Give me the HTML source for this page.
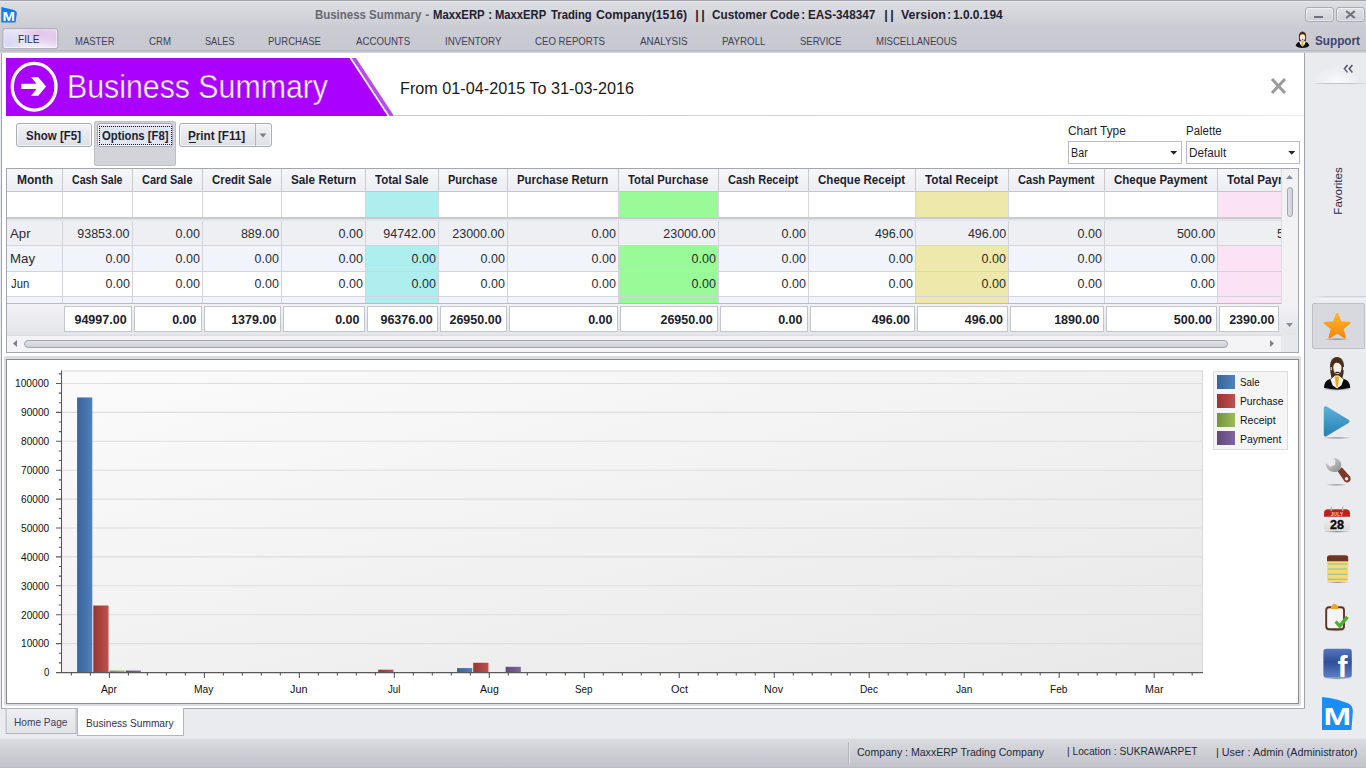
<!DOCTYPE html>
<html lang="en"><head><meta charset="utf-8"><title>Business Summary - MaxxERP</title>
<style>
html,body{margin:0;padding:0}
body{width:1366px;height:768px;overflow:hidden;position:relative;background:#eaebef;font-family:"Liberation Sans",sans-serif}
div,span.t,svg{position:absolute;box-sizing:border-box}
span.t{white-space:pre;transform-origin:0 50%;display:block}
</style></head>
<body>
<div style="left:0px;top:0px;width:1366px;height:53px;background:linear-gradient(#dedfe3 0,#d6d7dc 12px,#cbccd3 28px,#c8c9d0 49.5px,#b7b8c1 50.5px,#cdced5 52px,#d7d8dd 53px)"></div>
<div style="left:0px;top:0px;width:1366px;height:1px;background:#a4a6ae"></div>
<div style="left:0px;top:1px;width:1366px;height:1px;background:#e4e5e9"></div>
<svg style="left:0px;top:5px" width="19" height="19" viewBox="0 5 19 19"><path d="M1.3 6.9 L13.2 9.8 Q17.2 11 16.8 13.6 L15.6 22.6 L1.3 22.6 Z" fill="#0b80ee"/><text x="8.7" y="20.6" font-family="Liberation Sans,sans-serif" font-size="12" font-weight="700" fill="#fff" text-anchor="middle" textLength="12.4" lengthAdjust="spacingAndGlyphs">M</text></svg>
<span class="t" style="left:315.40px;top:4.30px;font-size:13.1px;line-height:21px;font-weight:700;color:#666873;transform:scaleX(0.8742);">Business Summary</span>
<span class="t" style="left:425.32px;top:4.30px;font-size:13.1px;line-height:21px;font-weight:700;color:#666873;transform-origin:50% 50%;transform:scaleX(0.9200);">-</span>
<span class="t" style="left:433.30px;top:4.30px;font-size:13.1px;line-height:21px;font-weight:700;color:#1f2030;transform:scaleX(0.8659);">MaxxERP</span>
<span class="t" style="left:487.62px;top:4.30px;font-size:13.1px;line-height:21px;font-weight:700;color:#1f2030;transform-origin:50% 50%;transform:scaleX(0.8800);">:</span>
<span class="t" style="left:494.80px;top:4.30px;font-size:13.1px;line-height:21px;font-weight:700;color:#1f2030;transform:scaleX(0.8575);">MaxxERP</span>
<span class="t" style="left:550.60px;top:4.30px;font-size:13.1px;line-height:21px;font-weight:700;color:#1f2030;transform:scaleX(0.8603);">Trading</span>
<span class="t" style="left:595.50px;top:4.30px;font-size:13.1px;line-height:21px;font-weight:700;color:#1f2030;transform:scaleX(0.9338);">Company(1516)</span>
<span class="t" style="left:694.54px;top:4.30px;font-size:13.1px;line-height:21px;font-weight:700;color:#1f2030;transform-origin:50% 50%;transform:scaleX(0.9600);letter-spacing:2.6px;">||</span>
<span class="t" style="left:712.20px;top:4.30px;font-size:13.1px;line-height:21px;font-weight:700;color:#1f2030;transform:scaleX(0.8962);">Customer</span>
<span class="t" style="left:770.30px;top:4.30px;font-size:13.1px;line-height:21px;font-weight:700;color:#1f2030;transform:scaleX(0.9007);">Code</span>
<span class="t" style="left:801.42px;top:4.30px;font-size:13.1px;line-height:21px;font-weight:700;color:#1f2030;transform-origin:50% 50%;transform:scaleX(0.8800);">:</span>
<span class="t" style="left:807.50px;top:4.30px;font-size:13.1px;line-height:21px;font-weight:700;color:#1f2030;transform:scaleX(0.8972);">EAS-348347</span>
<span class="t" style="left:883.54px;top:4.30px;font-size:13.1px;line-height:21px;font-weight:700;color:#1f2030;transform-origin:50% 50%;transform:scaleX(0.9600);letter-spacing:2.6px;">||</span>
<span class="t" style="left:901.00px;top:4.30px;font-size:13.1px;line-height:21px;font-weight:700;color:#1f2030;transform:scaleX(0.9466);">Version</span>
<span class="t" style="left:947.32px;top:4.30px;font-size:13.1px;line-height:21px;font-weight:700;color:#1f2030;transform-origin:50% 50%;transform:scaleX(0.8800);">:</span>
<span class="t" style="left:953.00px;top:4.30px;font-size:13.1px;line-height:21px;font-weight:700;color:#1f2030;transform:scaleX(0.9097);">1.0.0.194</span>
<div style="left:1305px;top:7px;width:29px;height:15px;border:1px solid #a9abb4;border-radius:3px;background:linear-gradient(#e2e3e7,#cfd0d6);box-shadow:inset 0 0 0 1px rgba(255,255,255,.45)"></div>
<div style="left:1336px;top:7px;width:29px;height:15px;border:1px solid #a9abb4;border-radius:3px;background:linear-gradient(#e2e3e7,#cfd0d6);box-shadow:inset 0 0 0 1px rgba(255,255,255,.45)"></div>
<div style="left:1314px;top:16px;width:9px;height:2px;background:#6f7180"></div>
<svg style="left:1345px;top:10px" width="11" height="9" viewBox="0 0 11 9"><path d="M1.2 1 L9.8 8 M9.8 1 L1.2 8" stroke="#6f7180" stroke-width="2.2" fill="none"/></svg>
<div style="left:2px;top:28px;width:56px;height:21px;transform:translate(0.4px,0.2px);border:1px solid #a9aab5;border-radius:3px;background:radial-gradient(ellipse 38% 80% at 66% 12%,rgba(226,188,232,.85),rgba(226,188,232,0) 100%),radial-gradient(ellipse 30% 70% at 96% 40%,rgba(222,192,232,.8),rgba(222,192,232,0) 100%),radial-gradient(ellipse 40% 70% at 8% 75%,rgba(212,212,246,.9),rgba(212,212,246,0) 100%),linear-gradient(#e9e3f4,#e8e4f5 55%,#f4f0fb);box-shadow:inset 0 0 0 1px rgba(255,255,255,.75)"></div>
<span class="t" style="left:18.00px;top:28.50px;font-size:11.6px;line-height:19px;font-weight:400;color:#2e3046;transform:scaleX(0.8776);">FILE</span>
<span class="t" style="left:74.50px;top:30.50px;font-size:11.6px;line-height:19px;font-weight:400;color:#3d4056;transform:scaleX(0.8171);">MASTER</span>
<span class="t" style="left:148.50px;top:30.50px;font-size:11.6px;line-height:19px;font-weight:400;color:#3d4056;transform:scaleX(0.8328);">CRM</span>
<span class="t" style="left:204.50px;top:30.50px;font-size:11.6px;line-height:19px;font-weight:400;color:#3d4056;transform:scaleX(0.7887);">SALES</span>
<span class="t" style="left:268.00px;top:30.50px;font-size:11.6px;line-height:19px;font-weight:400;color:#3d4056;transform:scaleX(0.8222);">PURCHASE</span>
<span class="t" style="left:355.75px;top:30.50px;font-size:11.6px;line-height:19px;font-weight:400;color:#3d4056;transform:scaleX(0.8334);">ACCOUNTS</span>
<span class="t" style="left:444.50px;top:30.50px;font-size:11.6px;line-height:19px;font-weight:400;color:#3d4056;transform:scaleX(0.8401);">INVENTORY</span>
<span class="t" style="left:535.00px;top:30.50px;font-size:11.6px;line-height:19px;font-weight:400;color:#3d4056;transform:scaleX(0.8311);">CEO REPORTS</span>
<span class="t" style="left:639.50px;top:30.50px;font-size:11.6px;line-height:19px;font-weight:400;color:#3d4056;transform:scaleX(0.8501);">ANALYSIS</span>
<span class="t" style="left:721.50px;top:30.50px;font-size:11.6px;line-height:19px;font-weight:400;color:#3d4056;transform:scaleX(0.8399);">PAYROLL</span>
<span class="t" style="left:799.50px;top:30.50px;font-size:11.6px;line-height:19px;font-weight:400;color:#3d4056;transform:scaleX(0.8182);">SERVICE</span>
<span class="t" style="left:875.50px;top:30.50px;font-size:11.6px;line-height:19px;font-weight:400;color:#3d4056;transform:scaleX(0.8212);">MISCELLANEOUS</span>
<svg style="left:1295px;top:31px" width="15" height="17" viewBox="0 0 15 17"><ellipse cx="7.5" cy="14.2" rx="6.6" ry="2.8" fill="#111"/><path d="M1.2 14 Q1.6 11.4 4.6 10.8 L7.5 10.2 L10.4 10.8 Q13.4 11.4 13.8 14 Z" fill="#101010"/><path d="M4.4 10.9 L5.6 10.2 L9.4 10.2 L10.6 10.9 L9.6 13.6 L7.5 15.8 L5.4 13.6 Z" fill="#f4f4f4"/><path d="M6.7 10.2 L8.3 10.2 L8.6 14 L7.5 15.6 L6.4 14 Z" fill="#f0b000"/><path d="M4.3 10 Q3.2 5 4.6 2.6 Q5.8 0.4 7.5 0.4 Q9.2 0.4 10.4 2.6 Q11.8 5 10.7 10 Z" fill="#4a2c17"/><ellipse cx="7.5" cy="6.3" rx="2.7" ry="3.7" fill="#f9e8d8"/><circle cx="7.7" cy="8.6" r="0.7" fill="#333"/><path d="M4.5 5.4 Q4.4 1 7.5 1 Q10.6 1 10.5 5.4 Q9.6 3.2 7.5 3.3 Q5.4 3.2 4.5 5.4 Z" fill="#4a2c17"/></svg>
<span class="t" style="left:1314.75px;top:29.80px;font-size:13.1px;line-height:21px;font-weight:700;color:#3a4470;transform:scaleX(0.8963);">Support</span>
<div style="left:1px;top:53px;width:1304px;height:656px;background:#fff;border:1px solid #a1a3ac;border-top:none"></div>
<svg style="left:6px;top:58px" width="392" height="58" viewBox="0 0 392 58"><path d="M0 0 H343.5 L381.5 58 H0 Z" fill="#aa00ff"/><path d="M345.6 0 H350 L388 58 H383.6 Z" fill="#b34df2"/><ellipse cx="28.15" cy="28.7" rx="21.9" ry="23.35" fill="none" stroke="#fff" stroke-width="3.3"/><path d="M25 19.15 H32.3 L40.1 28.5 L32.3 37.7 H25 L30.5 31.1 H15.35 V25.85 H30.5 Z" fill="#fff"/></svg>
<span class="t" style="left:66.50px;top:60.00px;font-size:33px;line-height:53px;font-weight:400;color:#fff;transform:scaleX(0.9182);-webkit-text-stroke:0.45px #aa00ff;">Business Summary</span>
<span class="t" style="left:400.00px;top:74.70px;font-size:17px;line-height:27px;font-weight:400;color:#1a1a1a;transform:scaleX(0.9535);">From 01-04-2015 To 31-03-2016</span>
<div style="left:393px;top:115px;width:911px;height:1px;background:linear-gradient(90deg,#c9cad0,#d9dade 80%,#eeeef1)"></div>
<svg style="left:1270px;top:77px" width="17" height="18" viewBox="0 0 17 18"><path d="M2 2 L15 16 M15 2 L2 16" stroke="#9b9b9b" stroke-width="3" fill="none"/></svg>
<div style="left:16px;top:123px;width:76px;height:24px;border:1px solid #a9abb5;border-radius:3px;background:linear-gradient(#f4f4f7,#e9eaee 45%,#dfe0e6);box-shadow:inset 0 0 0 1px rgba(255,255,255,.7)"></div>
<span class="t" style="left:26.00px;top:124.80px;font-size:13.1px;line-height:21px;font-weight:700;color:#1d1e2c;transform:scaleX(0.8788);">Show [F5]</span>
<div style="left:94px;top:121px;width:82px;height:45px;background:#d3d4da;border:1px solid #bdbec6;border-radius:2px"></div>
<div style="left:96.5px;top:123px;width:76.5px;height:24px;border:1px solid #a2a6b8;border-radius:3px;background:linear-gradient(#e3e7f5,#dde2f1 50%,#e6e9f5);box-shadow:inset 0 0 0 1px rgba(255,255,255,.6)"></div>
<div style="left:99px;top:126px;width:72.5px;height:18.5px;border:1px dotted #15151f"></div>
<span class="t" style="left:101.50px;top:124.80px;font-size:13.1px;line-height:21px;font-weight:700;color:#1d1e2c;transform:scaleX(0.8621);">Options [F8]</span>
<div style="left:179px;top:123px;width:93px;height:24px;border:1px solid #a9abb5;border-radius:3px;background:linear-gradient(#f4f4f7,#e9eaee 45%,#dfe0e6);box-shadow:inset 0 0 0 1px rgba(255,255,255,.7)"></div>
<div style="left:255px;top:124px;width:1px;height:22px;background:#b4b6bf"></div>
<span class="t" style="left:188.00px;top:124.80px;font-size:13.1px;line-height:21px;font-weight:700;color:#1d1e2c;transform:scaleX(0.8945);">Print [F11]</span>
<div style="left:188.5px;top:142px;width:7px;height:1px;background:#1d1e2c"></div>
<svg style="left:259px;top:133px" width="8" height="5" viewBox="0 0 8 5"><path d="M0.6 0.6 H7.4 L4 4.4 Z" fill="#7b7d88"/></svg>
<span class="t" style="left:1068.20px;top:120.90px;font-size:12.5px;line-height:20px;font-weight:400;color:#1d1e2c;transform:scaleX(0.9489);">Chart Type</span>
<span class="t" style="left:1186.30px;top:120.90px;font-size:12.5px;line-height:20px;font-weight:400;color:#1d1e2c;transform:scaleX(0.9173);">Palette</span>
<div style="left:1068px;top:141px;width:114px;height:23px;background:#fff;border:1px solid #b8bac4"></div>
<div style="left:1186px;top:141px;width:114px;height:23px;background:#fff;border:1px solid #b8bac4"></div>
<span class="t" style="left:1071.00px;top:143.00px;font-size:12.5px;line-height:20px;font-weight:400;color:#1d1e2c;transform:scaleX(0.8585);">Bar</span>
<span class="t" style="left:1189.40px;top:143.00px;font-size:12.5px;line-height:20px;font-weight:400;color:#1d1e2c;transform:scaleX(0.9392);">Default</span>
<svg style="left:1170px;top:151px" width="8" height="4" viewBox="0 0 8 4"><path d="M0.3 0 H7.2 L3.75 3.8 Z" fill="#23232d"/></svg>
<svg style="left:1288px;top:151px" width="8" height="4" viewBox="0 0 8 4"><path d="M0.3 0 H7.2 L3.75 3.8 Z" fill="#23232d"/></svg>
<div style="left:6px;top:168px;width:1293px;height:185px;background:#fff;border:1px solid #a3a6b0"></div>
<div style="left:7px;top:169px;width:1274px;height:135px;overflow:hidden">
<div style="left:0px;top:0px;width:1274px;height:22px;background:linear-gradient(#f6f6f9,#f1f2f6 60%,#edeef3)"></div>
<div style="left:0px;top:22px;width:1274px;height:1px;background:#c4c6ce"></div>
<div style="left:0px;top:23px;width:1274px;height:25px;background:#fff"></div>
<div style="left:0px;top:48px;width:1274px;height:2px;background:#c9cad1"></div>
<div style="left:0px;top:49.5px;width:1274px;height:2px;background:#e4e5ea"></div>
<div style="left:0px;top:51.5px;width:1274px;height:25px;background:#eeeff2"></div>
<div style="left:0px;top:76px;width:1274px;height:1px;background:#d3d4db"></div>
<div style="left:0px;top:77px;width:1274px;height:25px;background:#f1f4fa"></div>
<div style="left:0px;top:101.5px;width:1274px;height:1px;background:#d3d4db"></div>
<div style="left:0px;top:102.5px;width:1274px;height:25px;background:#fff"></div>
<div style="left:0px;top:127px;width:1274px;height:1px;background:#d3d4db"></div>
<div style="left:0px;top:128px;width:1274px;height:7px;background:#f1f4fa"></div>
<div style="left:359px;top:23px;width:72px;height:25px;background:#afeeee"></div>
<div style="left:359px;top:77px;width:72px;height:24.5px;background:#afeeee"></div>
<div style="left:359px;top:102.5px;width:72px;height:24.5px;background:#afeeee"></div>
<div style="left:359px;top:128px;width:72px;height:7px;background:#afeeee"></div>
<div style="left:612px;top:23px;width:99px;height:25px;background:#98fb98"></div>
<div style="left:612px;top:77px;width:99px;height:24.5px;background:#98fb98"></div>
<div style="left:612px;top:102.5px;width:99px;height:24.5px;background:#98fb98"></div>
<div style="left:612px;top:128px;width:99px;height:7px;background:#98fb98"></div>
<div style="left:909px;top:23px;width:92px;height:25px;background:#eee8aa"></div>
<div style="left:909px;top:77px;width:92px;height:24.5px;background:#eee8aa"></div>
<div style="left:909px;top:102.5px;width:92px;height:24.5px;background:#eee8aa"></div>
<div style="left:909px;top:128px;width:92px;height:7px;background:#eee8aa"></div>
<div style="left:1211px;top:23px;width:99px;height:25px;background:#fbe3f5"></div>
<div style="left:1211px;top:77px;width:99px;height:24.5px;background:#fbe3f5"></div>
<div style="left:1211px;top:102.5px;width:99px;height:24.5px;background:#fbe3f5"></div>
<div style="left:1211px;top:128px;width:99px;height:7px;background:#fbe3f5"></div>
<div style="left:55px;top:0px;width:1px;height:23px;background:#c9cbd3"></div>
<div style="left:55px;top:23px;width:1px;height:25px;background:#d6d7dd"></div>
<div style="left:55px;top:51.5px;width:1px;height:83px;background:#d3d4db"></div>
<div style="left:125px;top:0px;width:1px;height:23px;background:#c9cbd3"></div>
<div style="left:125px;top:23px;width:1px;height:25px;background:#d6d7dd"></div>
<div style="left:125px;top:51.5px;width:1px;height:83px;background:#d3d4db"></div>
<div style="left:195px;top:0px;width:1px;height:23px;background:#c9cbd3"></div>
<div style="left:195px;top:23px;width:1px;height:25px;background:#d6d7dd"></div>
<div style="left:195px;top:51.5px;width:1px;height:83px;background:#d3d4db"></div>
<div style="left:274px;top:0px;width:1px;height:23px;background:#c9cbd3"></div>
<div style="left:274px;top:23px;width:1px;height:25px;background:#d6d7dd"></div>
<div style="left:274px;top:51.5px;width:1px;height:83px;background:#d3d4db"></div>
<div style="left:358px;top:0px;width:1px;height:23px;background:#c9cbd3"></div>
<div style="left:358px;top:23px;width:1px;height:25px;background:#d6d7dd"></div>
<div style="left:358px;top:51.5px;width:1px;height:83px;background:#d3d4db"></div>
<div style="left:431px;top:0px;width:1px;height:23px;background:#c9cbd3"></div>
<div style="left:431px;top:23px;width:1px;height:25px;background:#d6d7dd"></div>
<div style="left:431px;top:51.5px;width:1px;height:83px;background:#d3d4db"></div>
<div style="left:500px;top:0px;width:1px;height:23px;background:#c9cbd3"></div>
<div style="left:500px;top:23px;width:1px;height:25px;background:#d6d7dd"></div>
<div style="left:500px;top:51.5px;width:1px;height:83px;background:#d3d4db"></div>
<div style="left:611px;top:0px;width:1px;height:23px;background:#c9cbd3"></div>
<div style="left:611px;top:23px;width:1px;height:25px;background:#d6d7dd"></div>
<div style="left:611px;top:51.5px;width:1px;height:83px;background:#d3d4db"></div>
<div style="left:711px;top:0px;width:1px;height:23px;background:#c9cbd3"></div>
<div style="left:711px;top:23px;width:1px;height:25px;background:#d6d7dd"></div>
<div style="left:711px;top:51.5px;width:1px;height:83px;background:#d3d4db"></div>
<div style="left:801px;top:0px;width:1px;height:23px;background:#c9cbd3"></div>
<div style="left:801px;top:23px;width:1px;height:25px;background:#d6d7dd"></div>
<div style="left:801px;top:51.5px;width:1px;height:83px;background:#d3d4db"></div>
<div style="left:908px;top:0px;width:1px;height:23px;background:#c9cbd3"></div>
<div style="left:908px;top:23px;width:1px;height:25px;background:#d6d7dd"></div>
<div style="left:908px;top:51.5px;width:1px;height:83px;background:#d3d4db"></div>
<div style="left:1001px;top:0px;width:1px;height:23px;background:#c9cbd3"></div>
<div style="left:1001px;top:23px;width:1px;height:25px;background:#d6d7dd"></div>
<div style="left:1001px;top:51.5px;width:1px;height:83px;background:#d3d4db"></div>
<div style="left:1097px;top:0px;width:1px;height:23px;background:#c9cbd3"></div>
<div style="left:1097px;top:23px;width:1px;height:25px;background:#d6d7dd"></div>
<div style="left:1097px;top:51.5px;width:1px;height:83px;background:#d3d4db"></div>
<div style="left:1210px;top:0px;width:1px;height:23px;background:#c9cbd3"></div>
<div style="left:1210px;top:23px;width:1px;height:25px;background:#d6d7dd"></div>
<div style="left:1210px;top:51.5px;width:1px;height:83px;background:#d3d4db"></div>
</div>
<div style="left:7px;top:169px;width:1274px;height:135px;overflow:hidden;background:none">
<span class="t" style="left:9.50px;top:-0.10px;font-size:13.1px;line-height:21px;font-weight:700;color:#1d1e2c;transform:scaleX(0.9164);">Month</span>
<span class="t" style="left:65.00px;top:-0.10px;font-size:13.1px;line-height:21px;font-weight:700;color:#1d1e2c;transform:scaleX(0.8064);">Cash Sale</span>
<span class="t" style="left:135.00px;top:-0.10px;font-size:13.1px;line-height:21px;font-weight:700;color:#1d1e2c;transform:scaleX(0.8356);">Card Sale</span>
<span class="t" style="left:204.75px;top:-0.10px;font-size:13.1px;line-height:21px;font-weight:700;color:#1d1e2c;transform:scaleX(0.8694);">Credit Sale</span>
<span class="t" style="left:283.50px;top:-0.10px;font-size:13.1px;line-height:21px;font-weight:700;color:#1d1e2c;transform:scaleX(0.8963);">Sale Return</span>
<span class="t" style="left:368.25px;top:-0.10px;font-size:13.1px;line-height:21px;font-weight:700;color:#1d1e2c;transform:scaleX(0.8784);">Total Sale</span>
<span class="t" style="left:441.25px;top:-0.10px;font-size:13.1px;line-height:21px;font-weight:700;color:#1d1e2c;transform:scaleX(0.8350);">Purchase</span>
<span class="t" style="left:510.00px;top:-0.10px;font-size:13.1px;line-height:21px;font-weight:700;color:#1d1e2c;transform:scaleX(0.8704);">Purchase Return</span>
<span class="t" style="left:621.25px;top:-0.10px;font-size:13.1px;line-height:21px;font-weight:700;color:#1d1e2c;transform:scaleX(0.8634);">Total Purchase</span>
<span class="t" style="left:721.25px;top:-0.10px;font-size:13.1px;line-height:21px;font-weight:700;color:#1d1e2c;transform:scaleX(0.8464);">Cash Receipt</span>
<span class="t" style="left:811.25px;top:-0.10px;font-size:13.1px;line-height:21px;font-weight:700;color:#1d1e2c;transform:scaleX(0.8813);">Cheque Receipt</span>
<span class="t" style="left:918.25px;top:-0.10px;font-size:13.1px;line-height:21px;font-weight:700;color:#1d1e2c;transform:scaleX(0.8981);">Total Receipt</span>
<span class="t" style="left:1011.00px;top:-0.10px;font-size:13.1px;line-height:21px;font-weight:700;color:#1d1e2c;transform:scaleX(0.8473);">Cash Payment</span>
<span class="t" style="left:1107.00px;top:-0.10px;font-size:13.1px;line-height:21px;font-weight:700;color:#1d1e2c;transform:scaleX(0.8797);">Cheque Payment</span>
<span class="t" style="left:1220.00px;top:-0.10px;font-size:13.1px;line-height:21px;font-weight:700;color:#1d1e2c;transform:scaleX(0.8897);">Total Payment</span>
<span class="t" style="left:3.00px;top:54.70px;font-size:12.8px;line-height:20px;font-weight:400;color:#2a2b36;transform:scaleX(1.0341);">Apr</span>
<span class="t" style="right:1151.20px;top:54.70px;font-size:12.8px;line-height:20px;font-weight:400;color:#2a2b36;transform-origin:100% 50%;transform:scaleX(0.9770);">93853.00</span>
<span class="t" style="right:1081.20px;top:54.70px;font-size:12.8px;line-height:20px;font-weight:400;color:#2a2b36;transform-origin:100% 50%;transform:scaleX(0.9770);">0.00</span>
<span class="t" style="right:1002.20px;top:54.70px;font-size:12.8px;line-height:20px;font-weight:400;color:#2a2b36;transform-origin:100% 50%;transform:scaleX(0.9770);">889.00</span>
<span class="t" style="right:918.20px;top:54.70px;font-size:12.8px;line-height:20px;font-weight:400;color:#2a2b36;transform-origin:100% 50%;transform:scaleX(0.9770);">0.00</span>
<span class="t" style="right:845.20px;top:54.70px;font-size:12.8px;line-height:20px;font-weight:400;color:#2a2b36;transform-origin:100% 50%;transform:scaleX(0.9770);">94742.00</span>
<span class="t" style="right:776.20px;top:54.70px;font-size:12.8px;line-height:20px;font-weight:400;color:#2a2b36;transform-origin:100% 50%;transform:scaleX(0.9770);">23000.00</span>
<span class="t" style="right:665.20px;top:54.70px;font-size:12.8px;line-height:20px;font-weight:400;color:#2a2b36;transform-origin:100% 50%;transform:scaleX(0.9770);">0.00</span>
<span class="t" style="right:565.20px;top:54.70px;font-size:12.8px;line-height:20px;font-weight:400;color:#2a2b36;transform-origin:100% 50%;transform:scaleX(0.9770);">23000.00</span>
<span class="t" style="right:475.20px;top:54.70px;font-size:12.8px;line-height:20px;font-weight:400;color:#2a2b36;transform-origin:100% 50%;transform:scaleX(0.9770);">0.00</span>
<span class="t" style="right:368.20px;top:54.70px;font-size:12.8px;line-height:20px;font-weight:400;color:#2a2b36;transform-origin:100% 50%;transform:scaleX(0.9770);">496.00</span>
<span class="t" style="right:275.20px;top:54.70px;font-size:12.8px;line-height:20px;font-weight:400;color:#2a2b36;transform-origin:100% 50%;transform:scaleX(0.9770);">496.00</span>
<span class="t" style="right:179.20px;top:54.70px;font-size:12.8px;line-height:20px;font-weight:400;color:#2a2b36;transform-origin:100% 50%;transform:scaleX(0.9770);">0.00</span>
<span class="t" style="right:66.20px;top:54.70px;font-size:12.8px;line-height:20px;font-weight:400;color:#2a2b36;transform-origin:100% 50%;transform:scaleX(0.9770);">500.00</span>
<span class="t" style="right:-33.80px;top:54.70px;font-size:12.8px;line-height:20px;font-weight:400;color:#2a2b36;transform-origin:100% 50%;transform:scaleX(0.9770);">500.00</span>
<span class="t" style="left:3.00px;top:79.80px;font-size:12.8px;line-height:20px;font-weight:400;color:#2a2b36;transform:scaleX(1.0338);">May</span>
<span class="t" style="right:1151.20px;top:79.80px;font-size:12.8px;line-height:20px;font-weight:400;color:#2a2b36;transform-origin:100% 50%;transform:scaleX(0.9770);">0.00</span>
<span class="t" style="right:1081.20px;top:79.80px;font-size:12.8px;line-height:20px;font-weight:400;color:#2a2b36;transform-origin:100% 50%;transform:scaleX(0.9770);">0.00</span>
<span class="t" style="right:1002.20px;top:79.80px;font-size:12.8px;line-height:20px;font-weight:400;color:#2a2b36;transform-origin:100% 50%;transform:scaleX(0.9770);">0.00</span>
<span class="t" style="right:918.20px;top:79.80px;font-size:12.8px;line-height:20px;font-weight:400;color:#2a2b36;transform-origin:100% 50%;transform:scaleX(0.9770);">0.00</span>
<span class="t" style="right:845.20px;top:79.80px;font-size:12.8px;line-height:20px;font-weight:400;color:#2a2b36;transform-origin:100% 50%;transform:scaleX(0.9770);">0.00</span>
<span class="t" style="right:776.20px;top:79.80px;font-size:12.8px;line-height:20px;font-weight:400;color:#2a2b36;transform-origin:100% 50%;transform:scaleX(0.9770);">0.00</span>
<span class="t" style="right:665.20px;top:79.80px;font-size:12.8px;line-height:20px;font-weight:400;color:#2a2b36;transform-origin:100% 50%;transform:scaleX(0.9770);">0.00</span>
<span class="t" style="right:565.20px;top:79.80px;font-size:12.8px;line-height:20px;font-weight:400;color:#2a2b36;transform-origin:100% 50%;transform:scaleX(0.9770);">0.00</span>
<span class="t" style="right:475.20px;top:79.80px;font-size:12.8px;line-height:20px;font-weight:400;color:#2a2b36;transform-origin:100% 50%;transform:scaleX(0.9770);">0.00</span>
<span class="t" style="right:368.20px;top:79.80px;font-size:12.8px;line-height:20px;font-weight:400;color:#2a2b36;transform-origin:100% 50%;transform:scaleX(0.9770);">0.00</span>
<span class="t" style="right:275.20px;top:79.80px;font-size:12.8px;line-height:20px;font-weight:400;color:#2a2b36;transform-origin:100% 50%;transform:scaleX(0.9770);">0.00</span>
<span class="t" style="right:179.20px;top:79.80px;font-size:12.8px;line-height:20px;font-weight:400;color:#2a2b36;transform-origin:100% 50%;transform:scaleX(0.9770);">0.00</span>
<span class="t" style="right:66.20px;top:79.80px;font-size:12.8px;line-height:20px;font-weight:400;color:#2a2b36;transform-origin:100% 50%;transform:scaleX(0.9770);">0.00</span>
<span class="t" style="right:-33.80px;top:79.80px;font-size:12.8px;line-height:20px;font-weight:400;color:#2a2b36;transform-origin:100% 50%;transform:scaleX(0.9770);">0.00</span>
<span class="t" style="left:3.60px;top:104.90px;font-size:12.8px;line-height:20px;font-weight:400;color:#2a2b36;transform:scaleX(0.8794);">Jun</span>
<span class="t" style="right:1151.20px;top:104.90px;font-size:12.8px;line-height:20px;font-weight:400;color:#2a2b36;transform-origin:100% 50%;transform:scaleX(0.9770);">0.00</span>
<span class="t" style="right:1081.20px;top:104.90px;font-size:12.8px;line-height:20px;font-weight:400;color:#2a2b36;transform-origin:100% 50%;transform:scaleX(0.9770);">0.00</span>
<span class="t" style="right:1002.20px;top:104.90px;font-size:12.8px;line-height:20px;font-weight:400;color:#2a2b36;transform-origin:100% 50%;transform:scaleX(0.9770);">0.00</span>
<span class="t" style="right:918.20px;top:104.90px;font-size:12.8px;line-height:20px;font-weight:400;color:#2a2b36;transform-origin:100% 50%;transform:scaleX(0.9770);">0.00</span>
<span class="t" style="right:845.20px;top:104.90px;font-size:12.8px;line-height:20px;font-weight:400;color:#2a2b36;transform-origin:100% 50%;transform:scaleX(0.9770);">0.00</span>
<span class="t" style="right:776.20px;top:104.90px;font-size:12.8px;line-height:20px;font-weight:400;color:#2a2b36;transform-origin:100% 50%;transform:scaleX(0.9770);">0.00</span>
<span class="t" style="right:665.20px;top:104.90px;font-size:12.8px;line-height:20px;font-weight:400;color:#2a2b36;transform-origin:100% 50%;transform:scaleX(0.9770);">0.00</span>
<span class="t" style="right:565.20px;top:104.90px;font-size:12.8px;line-height:20px;font-weight:400;color:#2a2b36;transform-origin:100% 50%;transform:scaleX(0.9770);">0.00</span>
<span class="t" style="right:475.20px;top:104.90px;font-size:12.8px;line-height:20px;font-weight:400;color:#2a2b36;transform-origin:100% 50%;transform:scaleX(0.9770);">0.00</span>
<span class="t" style="right:368.20px;top:104.90px;font-size:12.8px;line-height:20px;font-weight:400;color:#2a2b36;transform-origin:100% 50%;transform:scaleX(0.9770);">0.00</span>
<span class="t" style="right:275.20px;top:104.90px;font-size:12.8px;line-height:20px;font-weight:400;color:#2a2b36;transform-origin:100% 50%;transform:scaleX(0.9770);">0.00</span>
<span class="t" style="right:179.20px;top:104.90px;font-size:12.8px;line-height:20px;font-weight:400;color:#2a2b36;transform-origin:100% 50%;transform:scaleX(0.9770);">0.00</span>
<span class="t" style="right:66.20px;top:104.90px;font-size:12.8px;line-height:20px;font-weight:400;color:#2a2b36;transform-origin:100% 50%;transform:scaleX(0.9770);">0.00</span>
<span class="t" style="right:-33.80px;top:104.90px;font-size:12.8px;line-height:20px;font-weight:400;color:#2a2b36;transform-origin:100% 50%;transform:scaleX(0.9770);">0.00</span>
</div>
<div style="left:7px;top:303px;width:1291px;height:1px;background:#b9bbc4"></div>
<div style="left:7px;top:304px;width:1291px;height:31px;background:linear-gradient(#f2f2f5,#e4e5ea)"></div>
<div style="left:64px;top:306px;width:67.5px;height:26px;background:#fff;border:1px solid #c3c5cd"></div>
<span class="t" style="right:1239.10px;top:309.30px;font-size:13.1px;line-height:21px;font-weight:700;color:#1d1e2c;transform-origin:100% 50%;transform:scaleX(0.9550);">94997.00</span>
<div style="left:134px;top:306px;width:67.5px;height:26px;background:#fff;border:1px solid #c3c5cd"></div>
<span class="t" style="right:1169.10px;top:309.30px;font-size:13.1px;line-height:21px;font-weight:700;color:#1d1e2c;transform-origin:100% 50%;transform:scaleX(0.9550);">0.00</span>
<div style="left:204px;top:306px;width:76.5px;height:26px;background:#fff;border:1px solid #c3c5cd"></div>
<span class="t" style="right:1090.10px;top:309.30px;font-size:13.1px;line-height:21px;font-weight:700;color:#1d1e2c;transform-origin:100% 50%;transform:scaleX(0.9550);">1379.00</span>
<div style="left:283px;top:306px;width:81.5px;height:26px;background:#fff;border:1px solid #c3c5cd"></div>
<span class="t" style="right:1006.10px;top:309.30px;font-size:13.1px;line-height:21px;font-weight:700;color:#1d1e2c;transform-origin:100% 50%;transform:scaleX(0.9550);">0.00</span>
<div style="left:367px;top:306px;width:70.5px;height:26px;background:#fff;border:1px solid #c3c5cd"></div>
<span class="t" style="right:933.10px;top:309.30px;font-size:13.1px;line-height:21px;font-weight:700;color:#1d1e2c;transform-origin:100% 50%;transform:scaleX(0.9550);">96376.00</span>
<div style="left:440px;top:306px;width:66.5px;height:26px;background:#fff;border:1px solid #c3c5cd"></div>
<span class="t" style="right:864.10px;top:309.30px;font-size:13.1px;line-height:21px;font-weight:700;color:#1d1e2c;transform-origin:100% 50%;transform:scaleX(0.9550);">26950.00</span>
<div style="left:509px;top:306px;width:108.5px;height:26px;background:#fff;border:1px solid #c3c5cd"></div>
<span class="t" style="right:753.10px;top:309.30px;font-size:13.1px;line-height:21px;font-weight:700;color:#1d1e2c;transform-origin:100% 50%;transform:scaleX(0.9550);">0.00</span>
<div style="left:620px;top:306px;width:97.5px;height:26px;background:#fff;border:1px solid #c3c5cd"></div>
<span class="t" style="right:653.10px;top:309.30px;font-size:13.1px;line-height:21px;font-weight:700;color:#1d1e2c;transform-origin:100% 50%;transform:scaleX(0.9550);">26950.00</span>
<div style="left:720px;top:306px;width:87.5px;height:26px;background:#fff;border:1px solid #c3c5cd"></div>
<span class="t" style="right:563.10px;top:309.30px;font-size:13.1px;line-height:21px;font-weight:700;color:#1d1e2c;transform-origin:100% 50%;transform:scaleX(0.9550);">0.00</span>
<div style="left:810px;top:306px;width:104.5px;height:26px;background:#fff;border:1px solid #c3c5cd"></div>
<span class="t" style="right:456.10px;top:309.30px;font-size:13.1px;line-height:21px;font-weight:700;color:#1d1e2c;transform-origin:100% 50%;transform:scaleX(0.9550);">496.00</span>
<div style="left:917px;top:306px;width:90.5px;height:26px;background:#fff;border:1px solid #c3c5cd"></div>
<span class="t" style="right:363.10px;top:309.30px;font-size:13.1px;line-height:21px;font-weight:700;color:#1d1e2c;transform-origin:100% 50%;transform:scaleX(0.9550);">496.00</span>
<div style="left:1010px;top:306px;width:93.5px;height:26px;background:#fff;border:1px solid #c3c5cd"></div>
<span class="t" style="right:267.10px;top:309.30px;font-size:13.1px;line-height:21px;font-weight:700;color:#1d1e2c;transform-origin:100% 50%;transform:scaleX(0.9550);">1890.00</span>
<div style="left:1106px;top:306px;width:110.5px;height:26px;background:#fff;border:1px solid #c3c5cd"></div>
<span class="t" style="right:154.10px;top:309.30px;font-size:13.1px;line-height:21px;font-weight:700;color:#1d1e2c;transform-origin:100% 50%;transform:scaleX(0.9550);">500.00</span>
<div style="left:1219px;top:306px;width:59.5px;height:26px;background:#fff;border:1px solid #c3c5cd"></div>
<span class="t" style="right:92.10px;top:309.30px;font-size:13.1px;line-height:21px;font-weight:700;color:#1d1e2c;transform-origin:100% 50%;transform:scaleX(0.9550);">2390.00</span>
<div style="left:1281px;top:169px;width:17px;height:135px;background:#f2f2f5;border-left:1px solid #dcdde2"></div>
<div style="left:1286.5px;top:187px;width:6.5px;height:29.5px;background:linear-gradient(90deg,#dfe0e5,#cfd0d7);border:1px solid #a4a6b0;border-radius:3px"></div>
<svg style="left:1286px;top:175px" width="7" height="4" viewBox="0 0 7 4"><path d="M0 4 L3.5 0 L7 4 Z" fill="#8a8c97"/></svg>
<svg style="left:1286px;top:323px" width="7" height="4" viewBox="0 0 7 4"><path d="M0 0 L3.5 4 L7 0 Z" fill="#8a8c97"/></svg>
<div style="left:7px;top:335px;width:1291px;height:17px;background:#f4f4f7;border-top:1px solid #dcdde2"></div>
<div style="left:1281px;top:335px;width:17px;height:17px;background:#e7e8ec"></div>
<div style="left:24px;top:339.5px;width:1204px;height:8px;background:linear-gradient(#e1e2e7,#d0d1d8);border:1px solid #a4a6b0;border-radius:4px"></div>
<svg style="left:13px;top:340px" width="4" height="7" viewBox="0 0 4 7"><path d="M4 0 L0 3.5 L4 7 Z" fill="#7d7f8a"/></svg>
<svg style="left:1270px;top:340px" width="4" height="7" viewBox="0 0 4 7"><path d="M0 0 L4 3.5 L0 7 Z" fill="#7d7f8a"/></svg>
<div style="left:4px;top:356px;width:1297px;height:349.5px;background:#dcdde4;border-radius:2px"></div>
<div style="left:6px;top:359px;width:1293px;height:344.6px;background:#fff;border:1px solid #8c8c8c"></div>
<svg style="left:0;top:360px" width="1300" height="344" viewBox="0 360 1300 344"><defs><linearGradient id="pg" x1="0" y1="0" x2="1" y2="1"><stop offset="0" stop-color="#fbfbfb"/><stop offset="1" stop-color="#e8e8e8"/></linearGradient><linearGradient id="s0" x1="0" y1="0" x2="1" y2="0"><stop offset="0" stop-color="#3a6496"/><stop offset="1" stop-color="#4f81bd"/></linearGradient><linearGradient id="s1" x1="0" y1="0" x2="1" y2="0"><stop offset="0" stop-color="#963634"/><stop offset="1" stop-color="#c0504d"/></linearGradient><linearGradient id="s2" x1="0" y1="0" x2="1" y2="0"><stop offset="0" stop-color="#76923c"/><stop offset="1" stop-color="#9bbb59"/></linearGradient><linearGradient id="s3" x1="0" y1="0" x2="1" y2="0"><stop offset="0" stop-color="#5f497a"/><stop offset="1" stop-color="#8064a2"/></linearGradient></defs><rect x="61" y="370.5" width="1142" height="301.5" fill="url(#pg)"/><path d="M61 371.0 H1203 M1202.5 370.5 V672" stroke="#d9d9d9" stroke-width="1" fill="none"/><path d="M61 643.60 H1203" stroke="#dedede" stroke-width="1.1"/><path d="M61 614.70 H1203" stroke="#dedede" stroke-width="1.1"/><path d="M61 585.80 H1203" stroke="#dedede" stroke-width="1.1"/><path d="M61 556.90 H1203" stroke="#dedede" stroke-width="1.1"/><path d="M61 528.00 H1203" stroke="#dedede" stroke-width="1.1"/><path d="M61 499.10 H1203" stroke="#dedede" stroke-width="1.1"/><path d="M61 470.20 H1203" stroke="#dedede" stroke-width="1.1"/><path d="M61 441.30 H1203" stroke="#dedede" stroke-width="1.1"/><path d="M61 412.40 H1203" stroke="#dedede" stroke-width="1.1"/><path d="M61 383.50 H1203" stroke="#dedede" stroke-width="1.1"/><rect x="77.10" y="397.46" width="15.2" height="274.54" fill="url(#s0)"/><rect x="93.30" y="605.53" width="15.2" height="66.47" fill="url(#s1)"/><rect x="109.50" y="670.57" width="15.2" height="1.43" fill="url(#s2)"/><rect x="125.70" y="670.55" width="15.2" height="1.45" fill="url(#s3)"/><rect x="378.24" y="669.69" width="15.2" height="2.31" fill="url(#s1)"/><rect x="457.02" y="668.10" width="15.2" height="3.90" fill="url(#s0)"/><rect x="473.22" y="662.75" width="15.2" height="9.25" fill="url(#s1)"/><rect x="505.62" y="666.80" width="15.2" height="5.20" fill="url(#s3)"/><path d="M61.5 370.5 V673 M56 672.6 H1203" stroke="#585858" stroke-width="1.1" fill="none"/><path d="M56 672.50 H61 M58.8 662.87 H61 M58.8 653.24 H61 M56 643.60 H61 M58.8 633.97 H61 M58.8 624.34 H61 M56 614.70 H61 M58.8 605.07 H61 M58.8 595.44 H61 M56 585.80 H61 M58.8 576.17 H61 M58.8 566.54 H61 M56 556.90 H61 M58.8 547.27 H61 M58.8 537.64 H61 M56 528.00 H61 M58.8 518.37 H61 M58.8 508.74 H61 M56 499.10 H61 M58.8 489.47 H61 M58.8 479.84 H61 M56 470.20 H61 M58.8 460.57 H61 M58.8 450.94 H61 M56 441.30 H61 M58.8 431.67 H61 M58.8 422.04 H61 M56 412.40 H61 M58.8 402.77 H61 M58.8 393.14 H61 M56 383.50 H61 M58.8 373.87 H61 M109.40 672 V678 M71.40 672 V675.4 M90.40 672 V675.4 M128.40 672 V675.4 M147.40 672 V675.4 M204.38 672 V678 M166.38 672 V675.4 M185.38 672 V675.4 M223.38 672 V675.4 M242.38 672 V675.4 M299.36 672 V678 M261.36 672 V675.4 M280.36 672 V675.4 M318.36 672 V675.4 M337.36 672 V675.4 M394.34 672 V678 M356.34 672 V675.4 M375.34 672 V675.4 M413.34 672 V675.4 M432.34 672 V675.4 M489.32 672 V678 M451.32 672 V675.4 M470.32 672 V675.4 M508.32 672 V675.4 M527.32 672 V675.4 M584.30 672 V678 M546.30 672 V675.4 M565.30 672 V675.4 M603.30 672 V675.4 M622.30 672 V675.4 M679.28 672 V678 M641.28 672 V675.4 M660.28 672 V675.4 M698.28 672 V675.4 M717.28 672 V675.4 M774.26 672 V678 M736.26 672 V675.4 M755.26 672 V675.4 M793.26 672 V675.4 M812.26 672 V675.4 M869.24 672 V678 M831.24 672 V675.4 M850.24 672 V675.4 M888.24 672 V675.4 M907.24 672 V675.4 M964.22 672 V678 M926.22 672 V675.4 M945.22 672 V675.4 M983.22 672 V675.4 M1002.22 672 V675.4 M1059.20 672 V678 M1021.20 672 V675.4 M1040.20 672 V675.4 M1078.20 672 V675.4 M1097.20 672 V675.4 M1154.18 672 V678 M1116.18 672 V675.4 M1135.18 672 V675.4 M1173.18 672 V675.4 M1192.18 672 V675.4" stroke="#585858" stroke-width="1.1" fill="none"/></svg>
<span class="t" style="left:43.58px;top:663.30px;font-size:11.2px;line-height:18px;font-weight:400;color:#111;transform:scaleX(0.8701);">0</span>
<span class="t" style="left:20.70px;top:634.40px;font-size:11.2px;line-height:18px;font-weight:400;color:#111;transform:scaleX(0.9086);">10000</span>
<span class="t" style="left:20.70px;top:605.50px;font-size:11.2px;line-height:18px;font-weight:400;color:#111;transform:scaleX(0.9086);">20000</span>
<span class="t" style="left:20.70px;top:576.60px;font-size:11.2px;line-height:18px;font-weight:400;color:#111;transform:scaleX(0.9086);">30000</span>
<span class="t" style="left:20.70px;top:547.70px;font-size:11.2px;line-height:18px;font-weight:400;color:#111;transform:scaleX(0.9086);">40000</span>
<span class="t" style="left:20.70px;top:518.80px;font-size:11.2px;line-height:18px;font-weight:400;color:#111;transform:scaleX(0.9086);">50000</span>
<span class="t" style="left:20.70px;top:489.90px;font-size:11.2px;line-height:18px;font-weight:400;color:#111;transform:scaleX(0.9086);">60000</span>
<span class="t" style="left:20.70px;top:461.00px;font-size:11.2px;line-height:18px;font-weight:400;color:#111;transform:scaleX(0.9086);">70000</span>
<span class="t" style="left:20.70px;top:432.10px;font-size:11.2px;line-height:18px;font-weight:400;color:#111;transform:scaleX(0.9086);">80000</span>
<span class="t" style="left:20.70px;top:403.20px;font-size:11.2px;line-height:18px;font-weight:400;color:#111;transform:scaleX(0.9086);">90000</span>
<span class="t" style="left:14.98px;top:374.30px;font-size:11.2px;line-height:18px;font-weight:400;color:#111;transform:scaleX(0.9102);">100000</span>
<span class="t" style="left:101.00px;top:680.00px;font-size:11.2px;line-height:18px;font-weight:400;color:#111;transform:scaleX(0.9180);">Apr</span>
<span class="t" style="left:193.50px;top:680.00px;font-size:11.2px;line-height:18px;font-weight:400;color:#111;transform:scaleX(0.9216);">May</span>
<span class="t" style="left:289.50px;top:680.00px;font-size:11.2px;line-height:18px;font-weight:400;color:#111;transform:scaleX(0.9691);">Jun</span>
<span class="t" style="left:388.00px;top:680.00px;font-size:11.2px;line-height:18px;font-weight:400;color:#111;transform:scaleX(0.8661);">Jul</span>
<span class="t" style="left:479.80px;top:680.00px;font-size:11.2px;line-height:18px;font-weight:400;color:#111;transform:scaleX(0.9433);">Aug</span>
<span class="t" style="left:575.00px;top:680.00px;font-size:11.2px;line-height:18px;font-weight:400;color:#111;transform:scaleX(0.8781);">Sep</span>
<span class="t" style="left:670.50px;top:680.00px;font-size:11.2px;line-height:18px;font-weight:400;color:#111;transform:scaleX(0.9757);">Oct</span>
<span class="t" style="left:764.00px;top:680.00px;font-size:11.2px;line-height:18px;font-weight:400;color:#111;transform:scaleX(0.9539);">Nov</span>
<span class="t" style="left:859.50px;top:680.00px;font-size:11.2px;line-height:18px;font-weight:400;color:#111;transform:scaleX(0.9037);">Dec</span>
<span class="t" style="left:955.50px;top:680.00px;font-size:11.2px;line-height:18px;font-weight:400;color:#111;transform:scaleX(0.9137);">Jan</span>
<span class="t" style="left:1049.50px;top:680.00px;font-size:11.2px;line-height:18px;font-weight:400;color:#111;transform:scaleX(0.9067);">Feb</span>
<span class="t" style="left:1144.50px;top:680.00px;font-size:11.2px;line-height:18px;font-weight:400;color:#111;transform:scaleX(0.9591);">Mar</span>
<div style="left:1213px;top:370.5px;width:75px;height:79px;background:#f5f5f5;border:1px solid #dddddd"></div>
<div style="left:1217px;top:374.8px;width:18px;height:14px;background:linear-gradient(90deg,#3a6496,#4f81bd)"></div>
<span class="t" style="left:1239.60px;top:373.00px;font-size:11.2px;line-height:18px;font-weight:400;color:#111;transform:scaleX(0.8743);">Sale</span>
<div style="left:1217px;top:393.65000000000003px;width:18px;height:14px;background:linear-gradient(90deg,#963634,#c0504d)"></div>
<span class="t" style="left:1239.60px;top:391.85px;font-size:11.2px;line-height:18px;font-weight:400;color:#111;transform:scaleX(0.9172);">Purchase</span>
<div style="left:1217px;top:412.5px;width:18px;height:14px;background:linear-gradient(90deg,#76923c,#9bbb59)"></div>
<span class="t" style="left:1239.60px;top:410.70px;font-size:11.2px;line-height:18px;font-weight:400;color:#111;transform:scaleX(0.9374);">Receipt</span>
<div style="left:1217px;top:431.35px;width:18px;height:14px;background:linear-gradient(90deg,#5f497a,#8064a2)"></div>
<span class="t" style="left:1239.60px;top:429.55px;font-size:11.2px;line-height:18px;font-weight:400;color:#111;transform:scaleX(0.9367);">Payment</span>
<div style="left:1305px;top:53px;width:61px;height:685px;background:#eaebef"></div>
<svg style="left:1343px;top:64px" width="11" height="10" viewBox="0 0 11 10"><path d="M4.6 1 L1.4 4.8 L4.6 8.6 M9.4 1 L6.2 4.8 L9.4 8.6" stroke="#55586c" stroke-width="1.6" fill="none"/></svg>
<div style="left:1308px;top:56px;width:58px;height:27px;background:radial-gradient(ellipse 60% 90% at 50% 100%,rgba(255,255,255,.75),rgba(255,255,255,0) 70%)"></div>
<div style="left:1310px;top:83px;width:56px;height:1px;background:linear-gradient(90deg,rgba(190,192,201,0),#c3c5cd 25%,#c3c5cd 75%,rgba(190,192,201,.4))"></div>
<span class="t" style="left:1338.3px;top:190.5px;width:0;height:0;overflow:visible;transform:none"><span style="position:absolute;left:-23.85px;top:-9px;line-height:18px;font-size:11.6px;color:#2b2c48;white-space:pre;display:block;transform:rotate(-90deg) scaleX(0.9915);transform-origin:50% 50%">Favorites</span></span>
<div style="left:1310px;top:296px;width:56px;height:1px;background:linear-gradient(90deg,rgba(200,202,210,0),#cfd0d7 30%,#cfd0d7 100%)"></div>
<div style="left:1310px;top:299px;width:56px;height:1px;background:linear-gradient(90deg,rgba(255,255,255,0),#f6f6f8 30%,#f6f6f8 100%)"></div>
<div style="left:1312px;top:303px;width:52.5px;height:46px;background:#d8d9df;border:1px solid #bfc1ca;border-radius:2px"></div>
<svg style="left:1316px;top:300px" width="44" height="440" viewBox="1316 300 44 440"><defs><linearGradient id="gst" x1="0" y1="0" x2="0" y2="1"><stop offset="0" stop-color="#fdb52a"/><stop offset="1" stop-color="#f5870f"/></linearGradient><linearGradient id="gpl" x1="0" y1="0" x2="0" y2="1"><stop offset="0" stop-color="#5cb0dc"/><stop offset="1" stop-color="#2580b3"/></linearGradient><linearGradient id="gfb" x1="0" y1="0" x2="0" y2="1"><stop offset="0" stop-color="#5577c0"/><stop offset=".45" stop-color="#2f4f98"/><stop offset="1" stop-color="#5d80c8"/></linearGradient><linearGradient id="gcal" x1="0" y1="0" x2="0" y2="1"><stop offset="0" stop-color="#fdfdfd"/><stop offset="1" stop-color="#d9d9d9"/></linearGradient><linearGradient id="gwr" x1="0" y1="0" x2="1" y2="1"><stop offset="0" stop-color="#d5d5d5"/><stop offset="1" stop-color="#8e8e8e"/></linearGradient><radialGradient id="gsh"><stop offset="0" stop-color="#000" stop-opacity=".38"/><stop offset="1" stop-color="#000" stop-opacity="0"/></radialGradient></defs><ellipse cx="1337" cy="339.2" rx="13" ry="1.3" fill="url(#gsh)"/><polygon points="1337.20,313.60 1340.67,322.13 1349.85,322.79 1342.81,328.72 1345.02,337.66 1337.20,332.80 1329.38,337.66 1331.59,328.72 1324.55,322.79 1333.73,322.13" fill="url(#gst)" stroke="url(#gst)" stroke-width="1.8" stroke-linejoin="round"/><ellipse cx="1337" cy="389.6" rx="15" ry="1.3" fill="url(#gsh)"/><path d="M1331.6 378.5 Q1328.6 366 1331 361.2 Q1333.2 357.1 1337 357.1 Q1340.8 357.1 1343 361.2 Q1345.4 366 1342.4 378.5 Z" fill="#4a2d1b"/><ellipse cx="1337.4" cy="368" rx="4.1" ry="6.2" fill="#fbeee3"/><path d="M1332.6 366.4 Q1332.8 360 1337.4 360.2 Q1341.6 360.4 1341.8 366.8 Q1340 362.6 1336.4 362.8 Q1333.8 363 1332.6 366.4 Z" fill="#4a2d1b"/><path d="M1324 388 Q1323.8 381.4 1329.4 379.2 L1334.4 377 L1339.6 377 L1344.6 379.2 Q1350.4 381.4 1350.2 388 Q1337 390.8 1324 388 Z" fill="#0a0a0a"/><path d="M1335.4 375.6 L1330.4 379.4 L1332.6 385.2 L1337 388.6 L1341.4 385.2 L1343.6 379.4 L1338.6 375.6 Z" fill="#f3f3f3"/><path d="M1335 376.4 L1339 376.4 L1338.4 384 L1337 388.2 L1335.6 384 Z" fill="#e9a80b"/><path d="M1335.4 371.8 h4 v1.5 h-4z" fill="#2a2a2a"/><path d="M1331.2 367 v3.2 M1343.6 367 v3.2" stroke="#e8e8e8" stroke-width="1.1"/><ellipse cx="1337" cy="437.9" rx="15.5" ry="1.3" fill="url(#gsh)"/><path d="M1326.4 407 L1348.2 420.2 Q1349.8 421.3 1348.2 422.4 L1326.4 435.6 Q1324.4 436.4 1324.4 434.2 L1324.4 408.4 Q1324.4 406.2 1326.4 407 Z" fill="url(#gpl)" stroke="url(#gpl)" stroke-width="1.2" stroke-linejoin="round"/><ellipse cx="1336.5" cy="484.8" rx="11" ry="1.3" fill="url(#gsh)"/><path d="M1337.5 471 L1341.8 467.2 L1350 476.6 Q1351.6 479.6 1349.4 481.6 Q1347 483.4 1344.6 481.4 Z" fill="#7c3b2b"/><circle cx="1346.6" cy="478.8" r="1.7" fill="#f3f3f5"/><path d="M1332.6 458.4 Q1336.6 457.4 1339.4 460.4 Q1342.6 464 1340.4 468.4 Q1338 472.6 1333 472 Q1328.2 471.2 1326.2 466.6 Q1325.4 464.4 1325.8 463 L1330.4 467 L1335.2 464.6 L1335.2 459.8 Z" fill="url(#gwr)"/><ellipse cx="1337" cy="531.6" rx="14.5" ry="1.3" fill="url(#gsh)"/><path d="M1324 513 Q1324 509.2 1328 509.2 L1346 509.2 Q1350 509.2 1350 513 L1350 527.6 Q1350 530.8 1346.6 530.8 L1327.4 530.8 Q1324 530.8 1324 527.6 Z" fill="url(#gcal)"/><path d="M1324 516.8 L1324 513 Q1324 509.2 1328 509.2 L1346 509.2 Q1350 509.2 1350 513 L1350 516.8 Z" fill="#c3201c"/><path d="M1331.2 506.4 V511 M1342.8 506.4 V511" stroke="#b9b9b9" stroke-width="1.3"/><text x="1337" y="515.9" font-family="Liberation Sans,sans-serif" font-size="4.6" font-weight="700" fill="#f6d9d7" text-anchor="middle" letter-spacing=".3">JULY</text><text x="1337" y="528.8" font-family="Liberation Sans,sans-serif" font-size="12.6" font-weight="700" fill="#0b0b0b" text-anchor="middle" stroke="#0b0b0b" stroke-width=".35">28</text><ellipse cx="1337.5" cy="582.3" rx="12" ry="1.3" fill="url(#gsh)"/><path d="M1327 560.6 H1348.2 V579.4 Q1348.2 581.8 1345.8 581.8 H1329.4 Q1327 581.8 1327 579.4 Z" fill="#fbd86b"/><path d="M1327 561.2 V557.8 Q1327 555.2 1329.6 555.2 H1345.6 Q1348.2 555.2 1348.2 557.8 V561.2 Z" fill="#6e3426"/><path d="M1328 564 H1347.2 M1328 569 H1347.2 M1328 574.2 H1347.2 M1328 579.2 H1347.2" stroke="#72c4bb" stroke-width="1.05"/><ellipse cx="1336" cy="630.4" rx="10" ry="1.3" fill="url(#gsh)"/><rect x="1326.2" y="607.2" width="17.8" height="22" rx="3" fill="#f4f4f4" stroke="#5e3323" stroke-width="1.9"/><path d="M1331 609 V606.6 Q1334.6 601 1338.2 606.6 V609 Z" fill="#f3a126"/><path d="M1334.4 622.6 L1336.8 620.4 L1339.6 623.6 L1346.2 615.8 L1348.8 618 L1339.8 628.8 Z" fill="#4cae2c"/><ellipse cx="1337.5" cy="678.6" rx="14" ry="1.1" fill="url(#gsh)"/><rect x="1323.4" y="648.8" width="28.4" height="29" rx="3" fill="url(#gfb)"/><text x="1342.6" y="677.4" font-family="Liberation Sans,sans-serif" font-size="30" font-weight="700" fill="#fff" text-anchor="middle">f</text><path d="M1322 696.9 Q1338 698.6 1348.6 703.6 Q1353.2 706 1352.8 712 L1351.4 730 L1322 730 Z" fill="#1b8df6"/><text x="1337.3" y="725.3" font-family="Liberation Sans,sans-serif" font-size="23.8" font-weight="700" fill="#fff" text-anchor="middle" textLength="27.6" lengthAdjust="spacingAndGlyphs">M</text></svg>
<div style="left:0px;top:709px;width:1305px;height:29px;background:#eaebef"></div>
<div style="left:1px;top:708px;width:1304px;height:1px;background:#a6a8b3"></div>
<div style="left:6px;top:708px;width:71px;height:26px;transform:translate(-0.4px,0);background:linear-gradient(#efeff2,#e2e3e8);border:1px solid #b3b5be"></div>
<div style="left:77px;top:708px;width:107px;height:28px;background:#fff;border:1px solid #b3b5be;border-top:none"></div>
<div style="left:78px;top:707px;width:105px;height:3px;background:#fff;border:none"></div>
<span class="t" style="left:13.50px;top:711.50px;font-size:11.6px;line-height:19px;font-weight:400;color:#3c3e5c;transform:scaleX(0.8733);">Home Page</span>
<span class="t" style="left:85.50px;top:712.50px;font-size:11.6px;line-height:19px;font-weight:400;color:#2f3150;transform:scaleX(0.8757);">Business Summary</span>
<div style="left:0px;top:738px;width:1366px;height:30px;background:linear-gradient(#e6e7ea 0,#d9dadf 2px,#cfd0d6 14px,#c4c5cc 28px,#b9bac2 30px)"></div>
<div style="left:848px;top:742px;width:1px;height:22px;background:#b2b4bd"></div>
<div style="left:849px;top:742px;width:1px;height:22px;background:#e3e4e8"></div>
<span class="t" style="left:857.00px;top:741.80px;font-size:11.6px;line-height:19px;font-weight:400;color:#26273a;transform:scaleX(0.9102);">Company : MaxxERP Trading Company</span>
<span class="t" style="left:1066.50px;top:741.30px;font-size:11.6px;line-height:19px;font-weight:400;color:#26273a;transform:scaleX(0.8788);">| Location : SUKRAWARPET</span>
<span class="t" style="left:1215.50px;top:741.80px;font-size:11.6px;line-height:19px;font-weight:400;color:#26273a;transform:scaleX(0.9314);">| User : Admin (Administrator)</span>
</body></html>
